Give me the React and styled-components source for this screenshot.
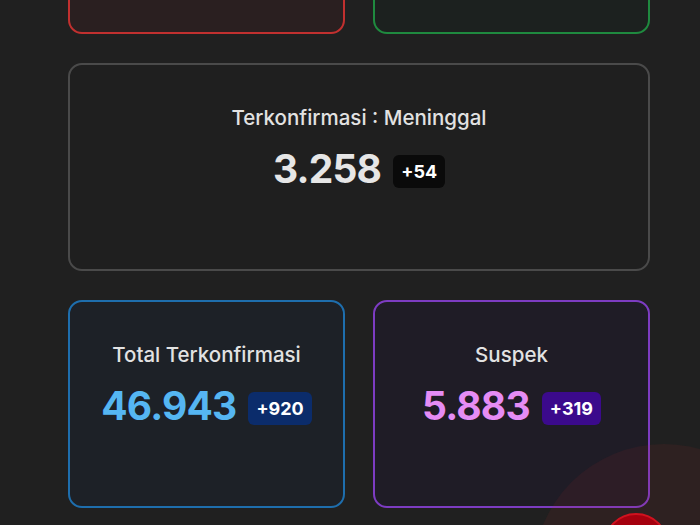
import React from "react";
import styled, { createGlobalStyle } from "styled-components";

const GlobalStyle = createGlobalStyle`
  html, body {
    margin: 0;
    padding: 0;
    background: #202020;
    font-family: Inter, "Noto Sans", sans-serif;
    overflow: hidden;
  }
`;

const tones = {
  red: { bg: "#2a1f20", border: "#c1302f" },
  green: { bg: "#1c211f", border: "#1f8a3f" },
  grey: { bg: "#1f1f1f", border: "#4a4a4a", num: "#e6e6e6", badge: "#0a0a0a" },
  blue: { bg: "#1d2127", border: "#1e6ead", num: "#55b6f2", badge: "#0b2c6b" },
  purple: { bg: "#1f1c26", border: "#7d3cc2", num: "#e58cf5", badge: "#3b0a8c" },
};

export default function App() {
  return (
    <>
      <GlobalStyle />
      <SPage>
        {/* top row is scrolled mostly out of view, only the card bottoms show */}
        <SRow>
          <StatCard tone="red" />
          <StatCard tone="green" />
        </SRow>
        <StatCard tone="grey" title="Terkonfirmasi : Meninggal" value="3.258" delta="+54" />
        <SRow>
          <StatCard tone="blue" title="Total Terkonfirmasi" value="46.943" delta="+920" />
          <StatCard tone="purple" title="Suspek" value="5.883" delta="+319" />
        </SRow>
      </SPage>
      <SGlow />
      <SFab />
    </>
  );
}

function StatCard({ tone, title, value, delta }) {
  const t = tones[tone];
  return (
    <SCard $bg={t.bg} $border={t.border}>
      {title && (
        <>
          <STitle>{title}</STitle>
          <SValueRow>
            <SValue $color={t.num}>{value}</SValue>
            <SBadge $bg={t.badge}>{delta}</SBadge>
          </SValueRow>
        </>
      )}
    </SCard>
  );
}

const SPage = styled.div`
  width: 582px;
  margin: -174px 0 0 68px;
  display: flex;
  flex-direction: column;
  gap: 29px;
`;

const SRow = styled.div`
  display: grid;
  grid-template-columns: 1fr 1fr;
  gap: 28px;
`;

const SCard = styled.div`
  box-sizing: border-box;
  height: 208px;
  border-radius: 14px;
  border: 2px solid ${p => p.$border};
  background: ${p => p.$bg};
  display: flex;
  flex-direction: column;
  align-items: center;
  padding-top: 40px;
`;

const STitle = styled.div`
  color: #e2e2e2;
  font-size: 20.5px;
  font-weight: 500;
  line-height: 26px;
`;

const SValueRow = styled.div`
  display: flex;
  align-items: center;
  gap: 12px;
  margin-top: 14px;
`;

const SValue = styled.div`
  color: ${p => p.$color};
  font-size: 39px;
  font-weight: 700;
  line-height: 48px;
  letter-spacing: -0.8px;
`;

const SBadge = styled.div`
  background: ${p => p.$bg};
  color: #fff;
  font-size: 18px;
  font-weight: 700;
  line-height: 23px;
  padding: 5px 8px;
  border-radius: 6px;
  margin-top: 4px;
`;

const SGlow = styled.div`
  position: fixed;
  left: 533px;
  top: 444px;
  width: 262px;
  height: 262px;
  border-radius: 50%;
  background: rgba(190, 40, 45, 0.09);
  pointer-events: none;
`;

const SFab = styled.button`
  position: fixed;
  left: 603px;
  top: 513px;
  width: 66px;
  height: 66px;
  border-radius: 50%;
  border: 2px solid #d0121f;
  background: #a5000e;
  padding: 0;
`;
